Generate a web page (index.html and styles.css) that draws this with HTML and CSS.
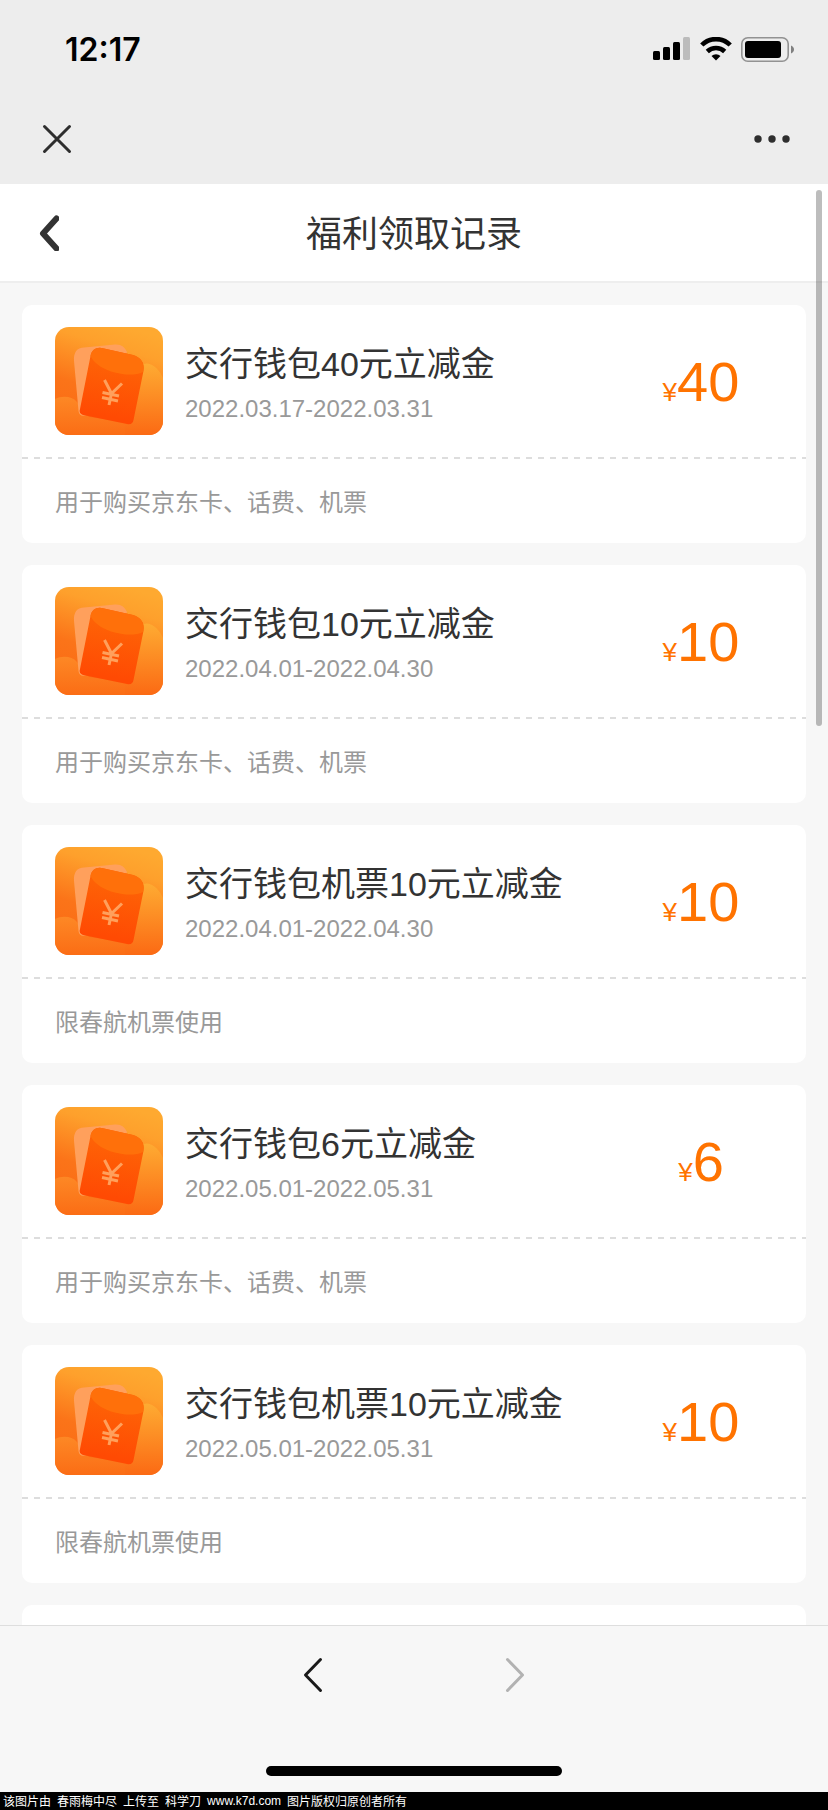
FILE: index.html
```html
<!DOCTYPE html>
<html lang="zh-CN">

<head>
    <meta charset="UTF-8">
    <meta name="viewport" content="width=device-width, initial-scale=1.0">
    <title>福利领取记录</title>
    <link rel="stylesheet" href="styles.css">
</head>

<body>
    <!-- shared coupon icon -->
    <svg class="sprite" width="0" height="0" aria-hidden="true">
        <defs>
            <linearGradient id="bg" x1="0.65" y1="0" x2="0.35" y2="1">
                <stop offset="0" stop-color="#fea930" />
                <stop offset="0.2" stop-color="#fea02c" />
                <stop offset="0.6" stop-color="#fb7419" />
                <stop offset="1" stop-color="#fa6a14" />
            </linearGradient>
            <linearGradient id="hill" x1="0" y1="0" x2="0" y2="1">
                <stop offset="0" stop-color="#feab32" />
                <stop offset="1" stop-color="#fb6a14" />
            </linearGradient>
            <linearGradient id="hillLeft" x1="0" y1="0" x2="0" y2="1">
                <stop offset="0" stop-color="#fd8825" />
                <stop offset="1" stop-color="#fb6d15" />
            </linearGradient>
            <linearGradient id="packet" x1="0.5" y1="0.2" x2="0.4" y2="0.9">
                <stop offset="0" stop-color="#fe6206" />
                <stop offset="1" stop-color="#ff4a03" />
            </linearGradient>
            <clipPath id="tile">
                <rect width="108" height="108" rx="14" />
            </clipPath>
        </defs>
        <symbol id="coupon" viewBox="0 0 108 108">
            <g clip-path="url(#tile)">
                <rect width="108" height="108" fill="url(#bg)" />
                <path d="M60 108V70C72 50 84 36 92 36.500C99 37 105 44 108 51V108Z" fill="url(#hill)" />
                <path d="M0 72C7 68.500 17 69 22 75L34 90L70 95V108H0Z" fill="url(#hillLeft)" />
                <path d="M29 20.500L60 17.500C66 17 70 20 72 25L60 60L32 88C27 90 24 88 23.500 84L19 34C18.500 25 22 21 29 20.500Z" fill="#ffa05c" />
                <path d="M35.500 29C37 22 42 19.500 49 21.500L78 28C86 30.500 90 36 88.500 44L78.500 93C78 96 76 98 72 97L28 88C25 87 24 85 25 82Z" fill="url(#packet)" />
                <path d="M35.500 29C37 22 42 19.500 49 21.500L78 28C86 30.500 90 36 88 45C80 49 68 48 56 44.500C46 41 39 36 35.500 29Z" fill="#ff700a" />
                <path d="M49.500 53L56.500 66.500L67 56.500M56.500 66.500L54 78M47.500 65.500L64 69M47 70.500L63 74" fill="none" stroke="#ffa05c" stroke-width="3" />
            </g>
        </symbol>
    </svg>

    <header class="top">
        <div class="status-bar">
            <span class="clock">12:17</span>
            <div class="status-icons">
                <svg width="38" height="24" viewBox="0 0 38 24">
                    <rect x="0" y="14" width="7" height="9" rx="1.500" />
                    <rect x="10" y="10" width="7" height="13" rx="1.500" />
                    <rect x="20" y="5" width="7" height="18" rx="1.500" />
                    <rect x="30" y="0" width="7" height="23" rx="1.500" fill="#bcbcbc" />
                </svg>
                <svg width="32" height="24" viewBox="0 0 32 24">
                    <path d="M1.800 8A20 20 0 0 1 30.200 8" fill="none" stroke="#000" stroke-width="4.600" />
                    <path d="M7.300 14.500A12.600 12.600 0 0 1 24.700 14.500" fill="none" stroke="#000" stroke-width="4.600" />
                    <path d="M11.500 19A6.500 6.500 0 0 1 20.500 19L16 23.500Z" />
                </svg>
                <svg width="54" height="25" viewBox="0 0 54 25">
                    <rect x="0.800" y="0.800" width="46.400" height="23.400" rx="6" fill="none" stroke="#929292" stroke-width="1.600" />
                    <rect x="4" y="4" width="36" height="17" rx="3" />
                    <path d="M50 8.500C54 10 54 15 50 16.500Z" fill="#808080" />
                </svg>
            </div>
        </div>
        <div class="app-bar">
            <button class="icon-button" aria-label="关闭">
                <svg width="30" height="30" viewBox="0 0 30 30">
                    <path d="M2.500 2.500L27.500 27.500M27.500 2.500L2.500 27.500" />
                </svg>
            </button>
            <button class="icon-button more" aria-label="更多">
                <svg width="36" height="8" viewBox="0 0 36 8">
                    <circle cx="4" cy="4" r="3.700" />
                    <circle cx="18" cy="4" r="3.700" />
                    <circle cx="32" cy="4" r="3.700" />
                </svg>
            </button>
        </div>
    </header>

    <main class="page">
        <div class="title-bar">
            <button class="icon-button title-back" aria-label="返回">
                <svg width="20" height="36" viewBox="0 0 20 36">
                    <path d="M17.500 3.500L4 18.500L17.500 33.500" />
                </svg>
            </button>
            <h1>福利领取记录</h1>
        </div>
        <div class="list">
            <section class="card">
                <div class="card-main">
                    <svg class="coupon-icon"><use href="#coupon" /></svg>
                    <div class="info">
                        <h2>交行钱包40元立减金</h2>
                        <p class="date">2022.03.17-2022.03.31</p>
                    </div>
                    <div class="amount"><span class="yen">¥</span>40</div>
                </div>
                <p class="note">用于购买京东卡、话费、机票</p>
            </section>
            <section class="card">
                <div class="card-main">
                    <svg class="coupon-icon"><use href="#coupon" /></svg>
                    <div class="info">
                        <h2>交行钱包10元立减金</h2>
                        <p class="date">2022.04.01-2022.04.30</p>
                    </div>
                    <div class="amount"><span class="yen">¥</span>10</div>
                </div>
                <p class="note">用于购买京东卡、话费、机票</p>
            </section>
            <section class="card">
                <div class="card-main">
                    <svg class="coupon-icon"><use href="#coupon" /></svg>
                    <div class="info">
                        <h2>交行钱包机票10元立减金</h2>
                        <p class="date">2022.04.01-2022.04.30</p>
                    </div>
                    <div class="amount"><span class="yen">¥</span>10</div>
                </div>
                <p class="note">限春航机票使用</p>
            </section>
            <section class="card">
                <div class="card-main">
                    <svg class="coupon-icon"><use href="#coupon" /></svg>
                    <div class="info">
                        <h2>交行钱包6元立减金</h2>
                        <p class="date">2022.05.01-2022.05.31</p>
                    </div>
                    <div class="amount"><span class="yen">¥</span>6</div>
                </div>
                <p class="note">用于购买京东卡、话费、机票</p>
            </section>
            <section class="card">
                <div class="card-main">
                    <svg class="coupon-icon"><use href="#coupon" /></svg>
                    <div class="info">
                        <h2>交行钱包机票10元立减金</h2>
                        <p class="date">2022.05.01-2022.05.31</p>
                    </div>
                    <div class="amount"><span class="yen">¥</span>10</div>
                </div>
                <p class="note">限春航机票使用</p>
            </section>
            <section class="card">
                <div class="card-main"></div>
            </section>
        </div>
        <div class="scrollbar"></div>
    </main>

    <footer class="toolbar">
        <nav class="history">
            <button class="icon-button" aria-label="后退">
                <svg width="20" height="36" viewBox="0 0 20 36">
                    <path d="M17.500 2.500L2.500 18L17.500 33.500" />
                </svg>
            </button>
            <button class="icon-button forward" aria-label="前进" disabled>
                <svg width="20" height="36" viewBox="0 0 20 36">
                    <path d="M2.500 2.500L17.500 18L2.500 33.500" />
                </svg>
            </button>
        </nav>
        <div class="home-indicator"></div>
    </footer>
    <div class="credit">
        <span>该图片由</span>
        <span>春雨梅中尽</span>
        <span>上传至</span>
        <span>科学刀</span>
        <span class="site">www.k7d.com</span>
        <span>图片版权归原创者所有</span>
    </div>
</body>

</html>
```
FILE: styles.css
```css
* {
    box-sizing: border-box;
}

body {
    display: flex;
    flex-direction: column;
    height: 100vh;
    margin: 0;
    background-color: #f7f7f7;
    color: #333;
    font-family: "Liberation Sans", "Noto Sans CJK SC", sans-serif;
}

h1,
h2,
p {
    margin: 0;
    font-weight: normal;
}

svg {
    display: block;
}

.sprite {
    position: absolute;
}

.icon-button {
    display: flex;
    padding: 0;
    border: none;
    background: none;
    cursor: pointer;
}

.icon-button path {
    fill: none;
    stroke: #2e2e2e;
    stroke-width: 3;
    stroke-linecap: round;
    stroke-linejoin: round;
}

/* top bars */
.top {
    flex: none;
    height: 184px;
    background-color: #ededed;
}

.status-bar {
    display: flex;
    align-items: center;
    justify-content: space-between;
    height: 98px;
    padding: 0 33px 0 65px;
}

.clock {
    color: #000;
    font-family: Inter, sans-serif;
    font-size: 32px;
    font-weight: 600;
}

.status-icons {
    display: flex;
    align-items: center;
    gap: 9px;
}

.app-bar {
    display: flex;
    align-items: center;
    justify-content: space-between;
    height: 82px;
    padding: 0 38px 0 42px;
}

.more {
    fill: #2e2e2e;
}

/* page */
.page {
    position: relative;
    flex: 1;
    min-height: 0;
    overflow: hidden;
}

.title-bar {
    display: grid;
    grid-template-columns: 60px 1fr 60px;
    align-items: center;
    height: 99px;
    padding: 0 39px;
    background-color: #fff;
    border-bottom: 2px solid #eee;
}

.title-back path {
    stroke: #333;
    stroke-width: 6;
}

h1 {
    padding-bottom: 4px;
    font-size: 36px;
    text-align: center;
}

.list {
    display: flex;
    flex-direction: column;
    gap: 22px;
    padding: 22px;
}

.card {
    flex: none;
    background-color: #fff;
    border-radius: 10px;
}

.card-main {
    display: flex;
    align-items: center;
    min-height: 154px;
    padding: 22px 22px 24px 33px;
    background: repeating-linear-gradient(to right, #ddd 0 6px, transparent 6px 12px) bottom / 100% 2px no-repeat;
}

.coupon-icon {
    width: 108px;
    height: 108px;
}

.info {
    flex: 1;
    padding-top: 8px;
    margin-left: 22px;
}

h2 {
    font-size: 34px;
    line-height: 48px;
}

.date {
    color: #999;
    font-size: 24px;
    line-height: 42px;
}

.amount {
    width: 166px;
    padding-top: 12px;
    color: #ff7300;
    font-size: 56px;
    line-height: 64px;
    text-align: center;
}

.yen {
    font-size: 26px;
}

.note {
    padding: 4px 33px 0;
    color: #999;
    font-size: 24px;
    line-height: 80px;
}

.scrollbar {
    position: absolute;
    top: 6px;
    right: 6px;
    width: 6px;
    height: 536px;
    border-radius: 3px;
    background-color: rgba(0, 0, 0, 0.26);
}

/* bottom bars */
.toolbar {
    display: flex;
    flex: none;
    flex-direction: column;
    align-items: center;
    justify-content: space-between;
    height: 167px;
    padding: 31px 0 16px;
    border-top: 1px solid #dedede;
}

.history {
    display: flex;
    gap: 182px;
}

.history path {
    stroke: #1a1a1a;
}

.history .forward path {
    stroke: #b2b2b2;
}

.home-indicator {
    width: 296px;
    height: 10px;
    border-radius: 5px;
    background-color: #000;
}

.credit {
    display: flex;
    flex: none;
    gap: 6px;
    height: 18px;
    padding-left: 3px;
    background-color: #000;
    color: #fff;
    font-family: "Noto Sans CJK SC", sans-serif;
    font-size: 12px;
    line-height: 18px;
    white-space: nowrap;
}

.site {
    font-family: "Liberation Sans", sans-serif;
}
```
